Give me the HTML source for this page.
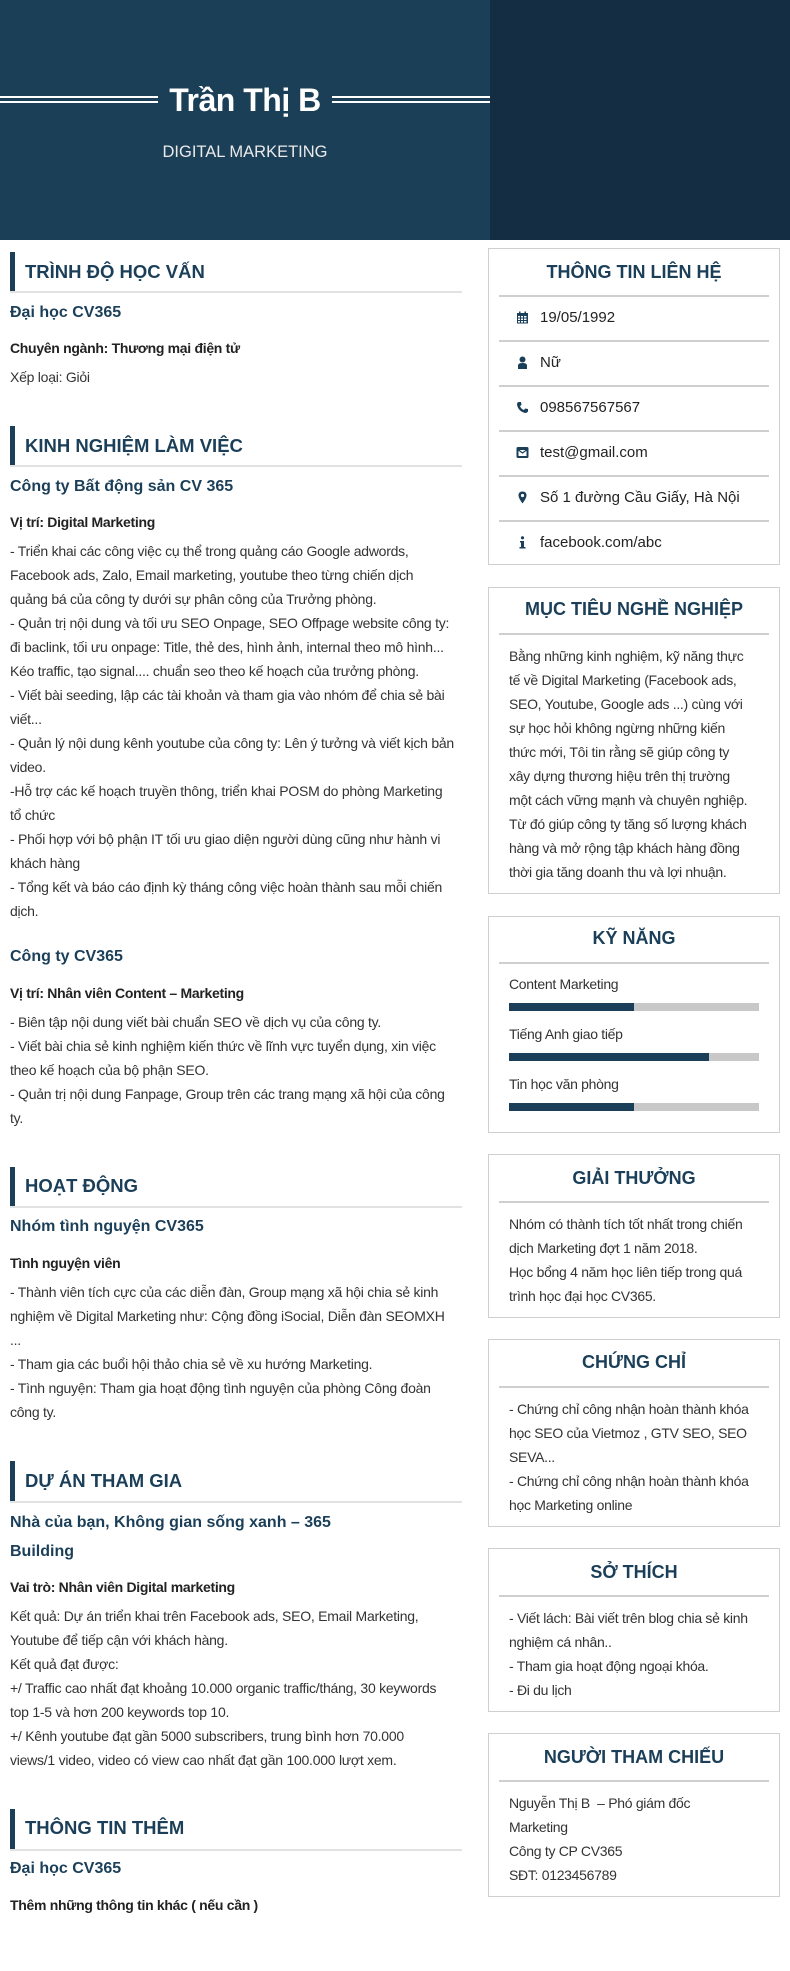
<!DOCTYPE html>
<html><head><meta charset="utf-8">
<style>
*{margin:0;padding:0;box-sizing:border-box}
body{width:790px;height:1971px;position:relative;background:#fff;font-family:"Liberation Sans",Arial,sans-serif;color:#333;overflow:hidden}
.a{position:absolute;white-space:nowrap}
.t{position:absolute;left:10px;white-space:nowrap;line-height:24px;font-size:14px;color:#333;letter-spacing:-0.25px}
.h{position:absolute;left:10px;white-space:nowrap;font-size:16px;font-weight:bold;color:#1b3f58;line-height:24px}
.s{position:absolute;left:10px;white-space:nowrap;font-size:14px;font-weight:bold;color:#222;line-height:24px;letter-spacing:-0.3px}
.bar{position:absolute;left:10px;width:5px;height:40px;background:#1b3f58}
.st{position:absolute;left:25px;font-size:18.5px;font-weight:bold;color:#1b3f58;line-height:24px;white-space:nowrap}
.ul{position:absolute;left:10px;width:452px;height:2px;background:#e2e2e2}
.box{position:absolute;left:488px;width:292px;border:1.5px solid #cfcfcf}
.bt{position:absolute;left:488px;width:292px;text-align:center;font-size:18px;font-weight:bold;color:#1b3f58;line-height:24px}
.dv{position:absolute;left:499px;width:270px;height:1.5px;background:#cfcfcf}
.rt{position:absolute;left:509px;white-space:nowrap;line-height:24px;font-size:14px;color:#333;letter-spacing:-0.3px}
.ct{position:absolute;left:540px;white-space:nowrap;font-size:15px;color:#222;line-height:24px}
.ic{position:absolute;left:516px;width:13px;height:13px}
.pb{position:absolute;left:509px;width:250px;height:8px;background:#c8c8c8}
.pf{position:absolute;left:0;top:0;height:8px;background:#1b3f58}
</style></head><body>
<div class="a" style="left:0;top:0;width:490px;height:240px;background:#1c3f58"></div>
<div class="a" style="left:490px;top:0;width:300px;height:240px;background:#142d42"></div>
<div class="a" style="left:0;top:96px;width:158px;height:2px;background:#fff"></div>
<div class="a" style="left:0;top:101px;width:158px;height:2px;background:#fff"></div>
<div class="a" style="left:332px;top:96px;width:158px;height:2px;background:#fff"></div>
<div class="a" style="left:332px;top:101px;width:158px;height:2px;background:#fff"></div>
<div class="a" style="left:158px;width:174px;top:80px;text-align:center;font-size:32px;font-weight:bold;color:#fff;line-height:40px;letter-spacing:-0.5px">Trần Thị B</div>
<div class="a" style="left:145px;width:200px;top:140px;text-align:center;font-size:16.5px;color:#eaeaea;line-height:24px">DIGITAL MARKETING</div>

<div class="bar" style="top:252px"></div><div class="st" style="top:260px">TRÌNH ĐỘ HỌC VẤN</div><div class="ul" style="top:291px"></div>
<div class="h" style="top:301px">Đại học CV365</div>
<div class="s" style="top:336px">Chuyên ngành: Thương mại điện tử</div>
<div class="t" style="top:365px">Xếp loại: Giỏi</div>

<div class="bar" style="top:426px"></div><div class="st" style="top:434px">KINH NGHIỆM LÀM VIỆC</div><div class="ul" style="top:465px"></div>
<div class="h" style="top:475px">Công ty Bất động sản CV 365</div>
<div class="s" style="top:510px">Vị trí: Digital Marketing</div>
<div class="t" style="top:539px">- Triển khai các công việc cụ thể trong quảng cáo Google adwords,<br>Facebook ads, Zalo, Email marketing, youtube theo từng chiến dịch<br>quảng bá của công ty dưới sự phân công của Trưởng phòng.<br>- Quản trị nội dung và tối ưu SEO Onpage, SEO Offpage website công ty:<br>đi baclink, tối ưu onpage: Title, thẻ des, hình ảnh, internal theo mô hình...<br>Kéo traffic, tạo signal.... chuẩn seo theo kế hoạch của trưởng phòng.<br>- Viết bài seeding, lập các tài khoản và tham gia vào nhóm để chia sẻ bài<br>viết...<br>- Quản lý nội dung kênh youtube của công ty: Lên ý tưởng và viết kịch bản<br>video.<br>-Hỗ trợ các kế hoạch truyền thông, triển khai POSM do phòng Marketing<br>tổ chức<br>- Phối hợp với bộ phận IT tối ưu giao diện người dùng cũng như hành vi<br>khách hàng<br>- Tổng kết và báo cáo định kỳ tháng công việc hoàn thành sau mỗi chiến<br>dịch.</div>
<div class="h" style="top:945px">Công ty CV365</div>
<div class="s" style="top:981px">Vị trí: Nhân viên Content – Marketing</div>
<div class="t" style="top:1010px">- Biên tập nội dung viết bài chuẩn SEO về dịch vụ của công ty.<br>- Viết bài chia sẻ kinh nghiệm kiến thức về lĩnh vực tuyển dụng, xin việc<br>theo kế hoạch của bộ phận SEO.<br>- Quản trị nội dung Fanpage, Group trên các trang mạng xã hội của công<br>ty.</div>

<div class="bar" style="top:1167px"></div><div class="st" style="top:1174px">HOẠT ĐỘNG</div><div class="ul" style="top:1206px"></div>
<div class="h" style="top:1215px">Nhóm tình nguyện CV365</div>
<div class="s" style="top:1251px">Tình nguyện viên</div>
<div class="t" style="top:1280px">- Thành viên tích cực của các diễn đàn, Group mạng xã hội chia sẻ kinh<br>nghiệm về Digital Marketing như: Cộng đồng iSocial, Diễn đàn SEOMXH<br>...<br>- Tham gia các buổi hội thảo chia sẻ về xu hướng Marketing.<br>- Tình nguyện: Tham gia hoạt động tình nguyện của phòng Công đoàn<br>công ty.</div>

<div class="bar" style="top:1461px"></div><div class="st" style="top:1469px">DỰ ÁN THAM GIA</div><div class="ul" style="top:1501px"></div>
<div class="h" style="top:1508px;line-height:29px">Nhà của bạn, Không gian sống xanh – 365<br>Building</div>
<div class="s" style="top:1575px">Vai trò: Nhân viên Digital marketing</div>
<div class="t" style="top:1604px">Kết quả: Dự án triển khai trên Facebook ads, SEO, Email Marketing,<br>Youtube để tiếp cận với khách hàng.<br>Kết quả đạt được:<br>+/ Traffic cao nhất đạt khoảng 10.000 organic traffic/tháng, 30 keywords<br>top 1-5 và hơn 200 keywords top 10.<br>+/ Kênh youtube đạt gần 5000 subscribers, trung bình hơn 70.000<br>views/1 video, video có view cao nhất đạt gần 100.000 lượt xem.</div>

<div class="bar" style="top:1809px"></div><div class="st" style="top:1816px">THÔNG TIN THÊM</div><div class="ul" style="top:1849px"></div>
<div class="h" style="top:1857px">Đại học CV365</div>
<div class="s" style="top:1893px">Thêm những thông tin khác ( nếu cần )</div>

<div class="box" style="top:248px;height:317px"></div>
<div class="bt" style="top:260px">THÔNG TIN LIÊN HỆ</div>
<div class="dv" style="top:295px"></div><div class="dv" style="top:340px"></div><div class="dv" style="top:385px"></div><div class="dv" style="top:430px"></div><div class="dv" style="top:475px"></div><div class="dv" style="top:520px"></div>
<svg class="ic" style="top:311px" viewBox="0 0 13 13"><rect x="1" y="2" width="11" height="10.5" fill="#1b3f58"/><rect x="3" y="0.5" width="1.5" height="3" fill="#1b3f58"/><rect x="8.5" y="0.5" width="1.5" height="3" fill="#1b3f58"/><g fill="#fff"><rect x="2" y="5" width="2" height="1.5"/><rect x="5" y="5" width="2" height="1.5"/><rect x="8" y="5" width="2.5" height="1.5"/><rect x="2" y="7.5" width="2" height="1.5"/><rect x="5" y="7.5" width="2" height="1.5"/><rect x="8" y="7.5" width="2.5" height="1.5"/><rect x="2" y="10" width="2" height="1.5"/><rect x="5" y="10" width="2" height="1.5"/><rect x="8" y="10" width="2.5" height="1.5"/></g></svg>
<div class="ct" style="top:306px">19/05/1992</div>
<svg class="ic" style="top:356px" viewBox="0 0 13 13"><circle cx="6.5" cy="3.5" r="3" fill="#1b3f58"/><path d="M2 13 V9.5 Q2 7 6.5 7 Q11 7 11 9.5 V13 Z" fill="#1b3f58"/></svg>
<div class="ct" style="top:351px">Nữ</div>
<svg class="ic" style="top:401px" viewBox="0 0 13 13"><path d="M2.5 1 L5 1 L5.5 4 L4 5 Q5 8 8 9 L9 7.5 L12 8 L12 10.5 Q11 12 9 12 Q2 10 1 3.5 Q1 1.5 2.5 1 Z" fill="#1b3f58"/></svg>
<div class="ct" style="top:396px">098567567567</div>
<svg class="ic" style="top:446px" viewBox="0 0 13 13"><rect x="0.5" y="1" width="12" height="11" rx="1.5" fill="#1b3f58"/><rect x="2.5" y="4" width="8" height="6" fill="#fff"/><path d="M2.5 4 L6.5 7 L10.5 4" stroke="#1b3f58" stroke-width="1.2" fill="none"/></svg>
<div class="ct" style="top:441px">test@gmail.com</div>
<svg class="ic" style="top:491px" viewBox="0 0 13 13"><path d="M6.5 0.5 Q10.5 0.5 10.5 4.5 Q10.5 7 6.5 12.5 Q2.5 7 2.5 4.5 Q2.5 0.5 6.5 0.5 Z" fill="#1b3f58"/><circle cx="6.5" cy="4.5" r="1.6" fill="#fff"/></svg>
<div class="ct" style="top:486px">Số 1 đường Cầu Giấy, Hà Nội</div>
<svg class="ic" style="top:536px" viewBox="0 0 13 13"><circle cx="6.5" cy="1.8" r="1.6" fill="#1b3f58"/><path d="M4 5 H8 V11 H9.5 V12.5 H3.5 V11 H5 V6.5 H4 Z" fill="#1b3f58"/></svg>
<div class="ct" style="top:531px">facebook.com/abc</div>

<div class="box" style="top:587px;height:307px"></div>
<div class="bt" style="top:597px">MỤC TIÊU NGHỀ NGHIỆP</div>
<div class="dv" style="top:633px"></div>
<div class="rt" style="top:644px">Bằng những kinh nghiệm, kỹ năng thực<br>tế về Digital Marketing (Facebook ads,<br>SEO, Youtube, Google ads ...) cùng với<br>sự học hỏi không ngừng những kiến<br>thức mới, Tôi tin rằng sẽ giúp công ty<br>xây dựng thương hiệu trên thị trường<br>một cách vững mạnh và chuyên nghiệp.<br>Từ đó giúp công ty tăng số lượng khách<br>hàng và mở rộng tập khách hàng đồng<br>thời gia tăng doanh thu và lợi nhuận.</div>

<div class="box" style="top:916px;height:217px"></div>
<div class="bt" style="top:926px">KỸ NĂNG</div>
<div class="dv" style="top:962px"></div>
<div class="rt" style="top:972px">Content Marketing</div>
<div class="pb" style="top:1003px"><div class="pf" style="width:125px"></div></div>
<div class="rt" style="top:1022px">Tiếng Anh giao tiếp</div>
<div class="pb" style="top:1053px"><div class="pf" style="width:200px"></div></div>
<div class="rt" style="top:1072px">Tin học văn phòng</div>
<div class="pb" style="top:1103px"><div class="pf" style="width:125px"></div></div>

<div class="box" style="top:1154px;height:164px"></div>
<div class="bt" style="top:1166px">GIẢI THƯỞNG</div>
<div class="dv" style="top:1201px"></div>
<div class="rt" style="top:1212px">Nhóm có thành tích tốt nhất trong chiến<br>dịch Marketing đợt 1 năm 2018.<br>Học bổng 4 năm học liên tiếp trong quá<br>trình học đại học CV365.</div>

<div class="box" style="top:1339px;height:188px"></div>
<div class="bt" style="top:1350px">CHỨNG CHỈ</div>
<div class="dv" style="top:1386px"></div>
<div class="rt" style="top:1397px">- Chứng chỉ công nhận hoàn thành khóa<br>học SEO của Vietmoz , GTV SEO, SEO<br>SEVA...<br>- Chứng chỉ công nhận hoàn thành khóa<br>học Marketing online</div>

<div class="box" style="top:1548px;height:164px"></div>
<div class="bt" style="top:1560px">SỞ THÍCH</div>
<div class="dv" style="top:1595px"></div>
<div class="rt" style="top:1606px">- Viết lách: Bài viết trên blog chia sẻ kinh<br>nghiệm cá nhân..<br>- Tham gia hoạt động ngoại khóa.<br>- Đi du lịch</div>

<div class="box" style="top:1733px;height:164px"></div>
<div class="bt" style="top:1745px">NGƯỜI THAM CHIẾU</div>
<div class="dv" style="top:1780px"></div>
<div class="rt" style="top:1791px">Nguyễn Thị B &nbsp;– Phó giám đốc<br>Marketing<br>Công ty CP CV365<br>SĐT: 0123456789</div>
</body></html>
